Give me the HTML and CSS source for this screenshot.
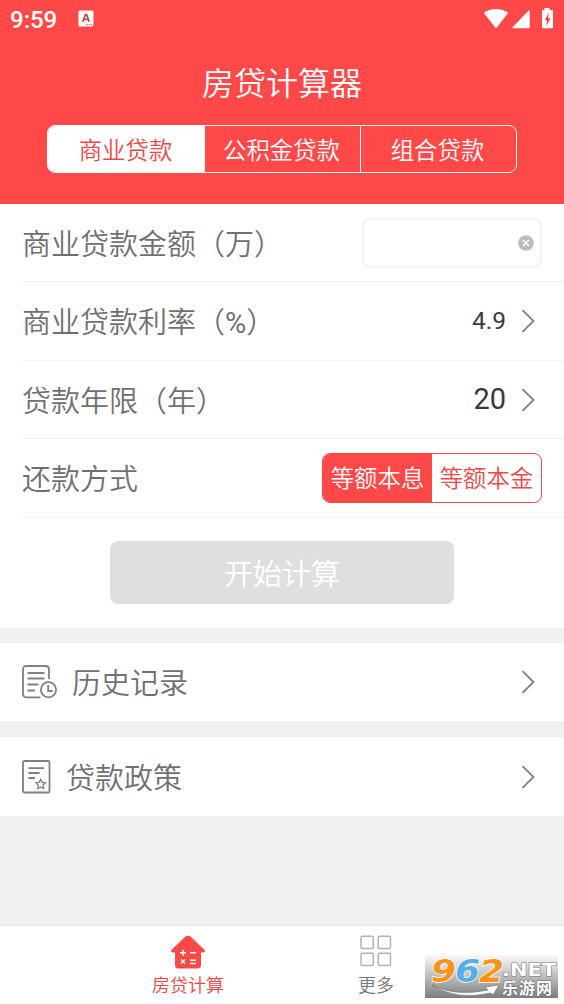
FILE: index.html
```html
<!DOCTYPE html>
<html lang="zh-CN">
<head>
<meta charset="utf-8">
<title>房贷计算器</title>
<link rel="stylesheet" href="styles.css">
</head>
<body>
<header class="header">
  <div class="status">
    <span class="time">9:59</span>
    <svg class="app-ind" width="16" height="17" viewBox="0 0 16 17"><rect x=".5" y=".5" width="15" height="16" rx="1.5" fill="#fff"/><path d="M4.900 11.800 7.400 4.500h1.200l2.500 7.300M5.700 9.500h4.600" fill="none" stroke="#c9453f" stroke-width="1.700"/><path d="M8.500 14.700h1.300M10.800 14.700h1.300M13 14.700h1.300" stroke="#e06a66" stroke-width="1.300"/></svg>
    <svg class="sys" width="72" height="22" viewBox="0 0 72 22" fill="#fff"><path d="M.8 5C4.200 2.400 8.500.9 13 .9S21.800 2.400 25.200 5L13.500 19.700q-.5.600-1 0Z"/><path d="M46.700 3v16.500a.8.800 0 0 1-.8.800H30q-1.300 0-.4-1L45.200 3q1.500-1.300 1.500 0Z"/><path d="M61.500 0h5v2H69q1 0 1 1v16.300q0 1-1 1H60q-1 0-1-1V3q0-1 1-1h1.500Z"/><path d="m65.800 4.500-4 7.800h2.400l-.8 5.700 4.100-7.800h-2.400l.7-5.700Z" fill="#e8403f"/></svg>
  </div>
  <h1 class="title">房贷计算器</h1>
  <nav class="tabs">
    <span class="tab tab-on">商业贷款</span>
    <span class="tab">公积金贷款</span>
    <span class="tab">组合贷款</span>
  </nav>
</header>
<main>
  <section class="form">
    <div class="row"><span class="label">商业贷款金额（万）</span>
      <div class="input"><svg width="16" height="16" viewBox="0 0 16 16"><circle cx="8" cy="8" r="7.800" fill="#bcbcbc"/><path d="m5 5 6 6M11 5l-6 6" stroke="#fff" stroke-width="1.500"/></svg></div>
    </div>
    <div class="row row-tall"><span class="label">商业贷款利率（<span class="latin">%</span>）</span><span class="value value-rate">4.9</span>
      <svg class="chev" width="14" height="24" viewBox="0 0 14 24"><path d="m1.500 1.200 11 10.800-11 10.800"/></svg></div>
    <div class="row"><span class="label">贷款年限（年）</span><span class="value">20</span>
      <svg class="chev" width="14" height="24" viewBox="0 0 14 24"><path d="m1.500 1.200 11 10.800-11 10.800"/></svg></div>
    <div class="row row-tall"><span class="label">还款方式</span>
      <div class="segment"><span class="seg seg-on">等额本息</span><span class="seg">等额本金</span></div></div>
    <div class="action"><button class="calc" disabled>开始计算</button></div>
  </section>
  <section class="link">
    <svg class="link-icon" width="36" height="34" viewBox="0 0 36 34"><path d="M18.500 32.300H4.500q-3.500 0-3.500-3.500V4.500Q1 1 4.500 1h19Q27 1 27 4.500V14M5.500 8h17M5.500 13.500h17M5.500 19.500h11M5.500 25.500h7.500"/><circle cx="26.500" cy="24.700" r="7.600"/><path d="M26.200 20v6h4.500"/></svg>
    <span class="label">历史记录</span>
    <svg class="chev" width="14" height="24" viewBox="0 0 14 24"><path d="m1.500 1.200 11 10.800-11 10.800"/></svg>
  </section>
  <section class="link link-last">
    <svg class="link-icon" width="30" height="34" viewBox="0 0 30 34"><rect x="1" y="1" width="26.500" height="31.500" rx="1.500"/><path d="M6.500 8.200h15.500M6.500 13h11M6.500 18h6.500"/><path stroke-width="1.300" d="m18.700 19.200 1.500 3.100 3.300.5-2.400 2.400.6 3.400-3-1.600-3 1.600.6-3.400-2.400-2.400 3.300-.5Z"/></svg>
    <span class="label">贷款政策</span>
    <svg class="chev" width="14" height="24" viewBox="0 0 14 24"><path d="m1.500 1.200 11 10.800-11 10.800"/></svg>
  </section>
</main>
<footer class="bottom">
  <a class="nav nav-on">
    <svg width="36" height="34" viewBox="0 0 36 34"><path d="M15.500 1.600q2.500-1.900 5 0L34.300 14.800q1.700 2.200-1 2.700H31V30q0 3.500-3.500 3.500h-19Q5 33.500 5 30V17.500H2.700Q0 17 1.700 14.800Z" fill="#ff4848"/><path d="M10 17.700h6M13 14.700v6M20 17.700h6M11 24.500l4 4M15 24.500l-4 4M20 25.300h6M20 28.400h6" stroke="#fff" stroke-width="1.500"/></svg>
    <span>房贷计算</span>
  </a>
  <a class="nav">
    <svg width="32" height="34" viewBox="0 0 32 34" fill="none" stroke="#b2b2b2" stroke-width="1.500"><rect x="1" y="1.300" width="12.300" height="12.200" rx="1.500"/><rect x="18.200" y="1.300" width="12.300" height="12.200" rx="1.500"/><rect x="1" y="18.300" width="12.300" height="12.200" rx="1.500"/><rect x="18.200" y="18.300" width="12.300" height="12.200" rx="1.500"/></svg>
    <span>更多</span>
  </a>
</footer>
<svg class="mark" width="133" height="43" viewBox="0 0 133 43">
  <defs><linearGradient id="fade" x2="0" y2="1"><stop offset="0" stop-color="#fafafa"/><stop offset=".5" stop-color="#bdbdbd"/><stop offset="1" stop-color="#7d7d7d"/></linearGradient></defs>
  <rect width="133" height="43" fill="url(#fade)"/>
  <path d="M7 30Q30 42 63 35l-3-3 14-2-6 10-2-2Q31 46 7 30Z" fill="#fff" stroke="#777" stroke-width=".7"/>
  <g class="mark-num"><text x="6" y="26.500" textLength="25" lengthAdjust="spacingAndGlyphs" fill="#f8941d">9</text><text x="30" y="26.500" textLength="25" lengthAdjust="spacingAndGlyphs" fill="#55aee5">6</text><text x="54" y="26.500" textLength="25" lengthAdjust="spacingAndGlyphs" fill="#f8941d">2</text></g>
  <text class="mark-net" x="77" y="20.500" textLength="54" lengthAdjust="spacingAndGlyphs">.NET</text>
  <text class="mark-cn" x="77" y="38.500" textLength="50">乐游网</text>
</svg>
</body>
</html>
```
FILE: styles.css
```css
* { box-sizing: border-box; }
body {
  margin: 0;
  width: 564px;
  height: 1004px;
  display: flex;
  flex-direction: column;
  overflow: hidden;
  background: #f1f1f1;
  color: #707070;
  font-family: Roboto, "Noto Sans CJK SC", sans-serif;
  font-size: 29px;
  font-weight: 350;
  line-height: 1;
}
main { flex: 1; }
.header { height: 204px; background: #ff4848; color: #fff; }
.status { height: 40px; display: flex; align-items: flex-start; padding: 8px 9px 0 10px; }
.time { width: 68px; font-size: 24px; font-weight: 500; line-height: 24px; }
.app-ind { margin-top: 2px; }
.sys { margin-left: auto; }
.title { height: 42px; margin: 23px 0 20px; font-size: 32px; line-height: 42px; font-weight: 350; text-align: center; }
.tabs {
  display: grid;
  grid-template-columns: 156px 156px 1fr;
  width: 470px;
  height: 48px;
  margin: 0 auto;
  border: 1.500px solid #fff;
  border-radius: 8px;
  overflow: hidden;
}
.tab { display: flex; align-items: center; justify-content: center; padding: 5px 1px 0 0; font-size: 23.400px; }
.tab + .tab { border-left: 1px solid #fff; padding-right: 2px; }
.tab-on { background: #fff; color: #f04848; }
.form { height: 424px; background: #fff; }
.row {
  height: 78px;
  margin-left: 22px;
  padding-right: 22px;
  display: flex;
  align-items: center;
  border-bottom: 1px solid #f2f2f2;
}
.row-tall { height: 79px; }
.label {
  flex: 1;
  padding-bottom: 2px;
  line-height: 40px;
  font-family: "Noto Sans CJK SC", sans-serif;
}
.latin { font-family: Roboto, sans-serif; font-weight: 400; line-height: 0; }
.value { color: #3a3a3a; font-weight: 400; }
.value-rate { font-size: 24.500px; padding-top: 1px; }
.chev, .link-icon { fill: none; stroke: #808080; stroke-width: 1.800; }
.chev { margin: 0 7px 0 15px; }
.input {
  width: 180px;
  height: 50px;
  padding-right: 6px;
  display: flex;
  align-items: center;
  justify-content: flex-end;
  border: 2px solid #f3f3f3;
  border-radius: 8px;
}
.segment {
  display: grid;
  grid-template-columns: 1fr 1fr;
  width: 220px;
  height: 50px;
  border: 1.500px solid #ef4b4b;
  border-radius: 8px;
  overflow: hidden;
  font-size: 23.400px;
}
.seg { display: flex; align-items: center; justify-content: center; padding-top: 4px; color: #ef4848; }
.seg-on { background: #ff4848; color: #fff; }
.action { display: flex; justify-content: center; padding-top: 23px; }
.calc {
  width: 344px;
  height: 63px;
  padding: 5px 0 0;
  border: 0;
  border-radius: 8px;
  background: #dfdfdf;
  color: #fff;
  font: inherit;
}
.link {
  height: 78px;
  margin-top: 15px;
  padding: 0 22px;
  display: flex;
  align-items: center;
  background: #fff;
}
.link-last { height: 79px; margin-top: 16px; }
.link .label { padding-left: 14px; }
.bottom {
  height: 79px;
  padding: 9px 0 0;
  display: grid;
  grid-template-columns: 188px 188px;
  justify-content: center;
  background: #fff;
  border-top: 1px solid #e7e7e7;
}
.nav { display: flex; flex-direction: column; align-items: center; gap: 8px; font-size: 18px; color: #777; }
.nav-on { color: #f04444; }
.mark { position: absolute; left: 425px; top: 955px; overflow: visible; }
.mark-num { font: italic bold 32px "DejaVu Sans", sans-serif; stroke: #fff; stroke-width: 1.500px; paint-order: stroke; }
.mark-net { font: bold 17px "DejaVu Sans", sans-serif; fill: #fff; stroke: #777; stroke-width: 1px; paint-order: stroke; }
.mark-cn { font: bold 16px "Noto Sans CJK SC", sans-serif; fill: #fff; stroke: #666; stroke-width: 1px; paint-order: stroke; }
```
